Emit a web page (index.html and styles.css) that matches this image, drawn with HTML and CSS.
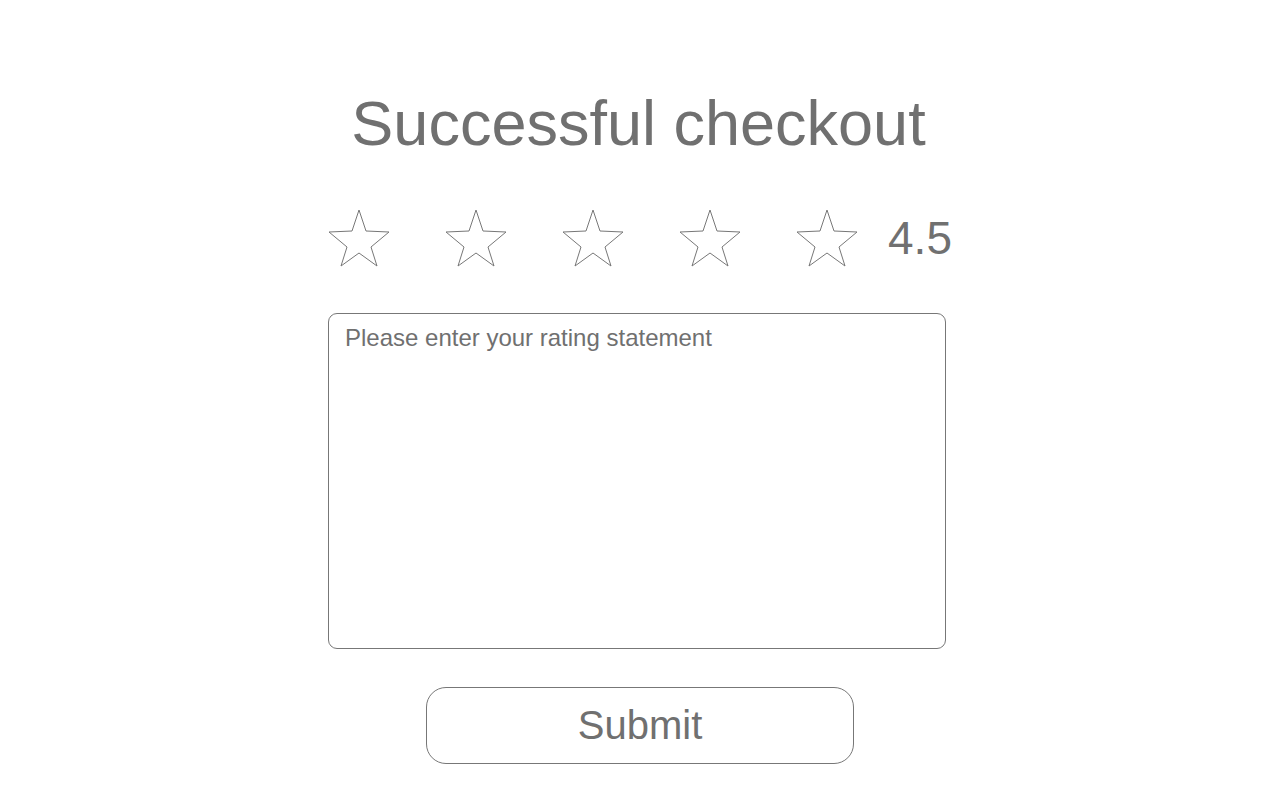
FILE: index.html
```html
<!DOCTYPE html>
<html lang="en">
<head>
<meta charset="utf-8">
<title>Successful checkout</title>
<link rel="stylesheet" href="styles.css">
</head>
<body>
<main class="page">
  <h1 class="title">Successful checkout</h1>
  <div class="rating">
    <svg class="star" viewBox="0 0 62 58" width="62" height="58"><polygon points="31,1 38,22 61,23 43,38 49,57 31,44 13,57 19,38 1,23 24,22"/></svg>
    <svg class="star" viewBox="0 0 62 58" width="62" height="58"><polygon points="31,1 38,22 61,23 43,38 49,57 31,44 13,57 19,38 1,23 24,22"/></svg>
    <svg class="star" viewBox="0 0 62 58" width="62" height="58"><polygon points="31,1 38,22 61,23 43,38 49,57 31,44 13,57 19,38 1,23 24,22"/></svg>
    <svg class="star" viewBox="0 0 62 58" width="62" height="58"><polygon points="31,1 38,22 61,23 43,38 49,57 31,44 13,57 19,38 1,23 24,22"/></svg>
    <svg class="star" viewBox="0 0 62 58" width="62" height="58"><polygon points="31,1 38,22 61,23 43,38 49,57 31,44 13,57 19,38 1,23 24,22"/></svg>
    <span class="score">4.5</span>
  </div>
  <textarea class="statement" placeholder="Please enter your rating statement"></textarea>
  <button class="submit" type="button">Submit</button>
</main>
</body>
</html>
```

FILE: styles.css
```css
html, body {
  margin: 0;
  padding: 0;
  background: #ffffff;
}

body {
  font-family: "Liberation Sans", Arial, sans-serif;
  color: #707070;
}

.page {
  display: flex;
  flex-direction: column;
  align-items: center;
  padding-top: 86px;
}

.title {
  margin: 0 3px 0 0;
  font-size: 63px;
  font-weight: normal;
  line-height: 74px;
  color: #707070;
}

.rating {
  display: flex;
  align-items: center;
  margin-top: 49px;
  height: 58px;
}

.star {
  display: block;
  margin-right: 55px;
}

.star:nth-of-type(5) {
  margin-right: 30px;
}

.star polygon {
  fill: none;
  stroke: #777777;
  stroke-width: 1;
  stroke-linejoin: miter;
}

.score {
  font-size: 46px;
  line-height: 58px;
  color: #707070;
}

.statement {
  box-sizing: border-box;
  width: 618px;
  height: 336px;
  margin: 46px 6px 0 0;
  padding: 10px 15px 8px 16px;
  border: 1px solid #777777;
  border-radius: 9px;
  font-family: "Liberation Sans", Arial, sans-serif;
  font-size: 24px;
  color: #707070;
  resize: none;
  outline: none;
  background: #ffffff;
}

.statement::placeholder {
  color: #707070;
  opacity: 1;
}

.submit {
  box-sizing: border-box;
  width: 428px;
  height: 77px;
  margin-top: 38px;
  padding: 0;
  border: 1px solid #777777;
  border-radius: 20px;
  background: #ffffff;
  font-family: "Liberation Sans", Arial, sans-serif;
  font-size: 40px;
  color: #707070;
}
```
